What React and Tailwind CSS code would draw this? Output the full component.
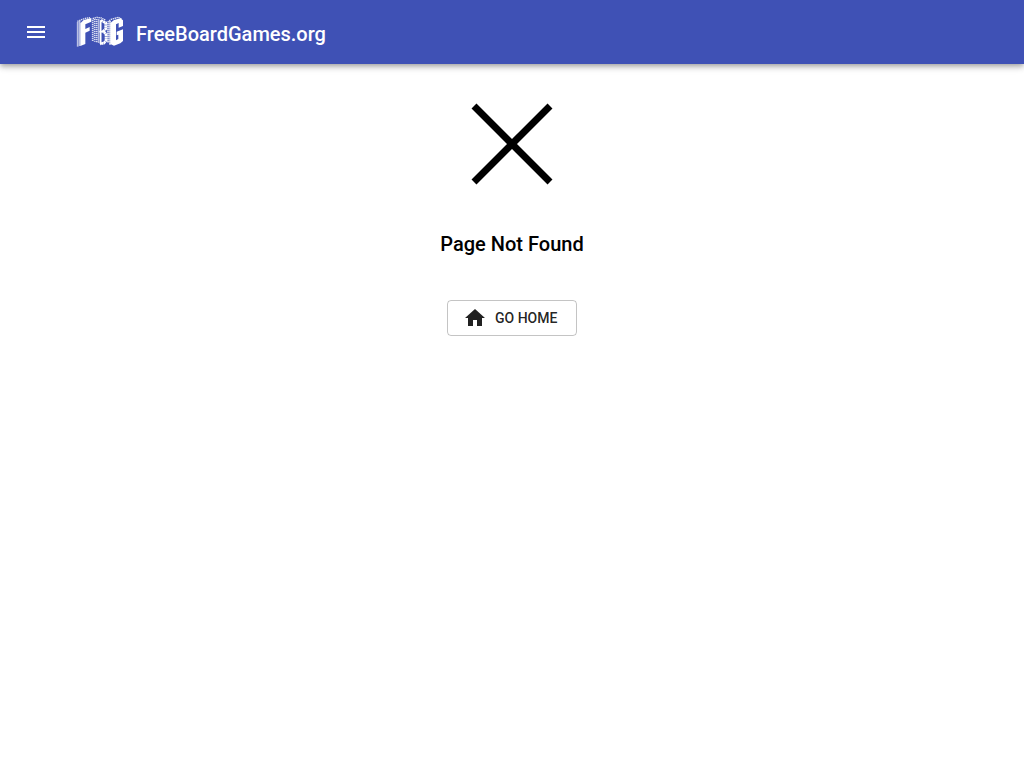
function MenuIcon() {
  return (
    <svg viewBox="0 0 24 24" className="size-6 fill-current" aria-hidden="true">
      <path d="M3 18h18v-2H3v2zm0-5h18v-2H3v2zm0-7v2h18V6H3z" />
    </svg>
  );
}

function HomeIcon() {
  return (
    <svg viewBox="0 0 24 24" className="size-6 fill-current" aria-hidden="true">
      <path d="M10 20v-6h4v6h5v-8h3L12 3 2 12h3v8z" />
    </svg>
  );
}

function Logo() {
  return (
    <svg viewBox="18 18 144 96" className="h-8 w-12" fill="none" stroke="#fff" aria-hidden="true">
      {/* F: brick side and solid face */}
      <path d="M23 37V110M29 34V108" strokeWidth="5" strokeDasharray="4 2" opacity=".85" />
      <path d="M22 34L46 25L62 23" strokeWidth="4" strokeDasharray="4 2" opacity=".85" />
      <path fill="#fff" stroke="none" d="M31 40L41 30L64 24V35L46 43V57L59 51V62L46 68V102L31 108Z" />
      {/* B: tiled block */}
      <path d="M68 26L80 22L94 24L106 30" strokeWidth="4" strokeDasharray="4 2" opacity=".9" />
      <path d="M68 29V93M74 27V95M80 27V97M86 28V99" strokeWidth="5" strokeDasharray="4 2" opacity=".8" />
      <path d="M92 31L107 38V57L100 64L108 72V92L102 99L90 102" strokeWidth="8" strokeDasharray="7 1" />
      <path d="M92 31V102M88 65H103" strokeWidth="5" />
      {/* G: brick side and solid face */}
      <path d="M114 38V99M120 33V104" strokeWidth="5" strokeDasharray="5 1" opacity=".9" />
      <path d="M113 36L123 28L145 22L155 27" strokeWidth="4" strokeDasharray="4 2" opacity=".9" />
      <path fill="#fff" stroke="none" d="M121 39L132 30L151 25L159 31V48L146 53V39L138 43V91L145 87V74L140 76V65L159 58V93L151 100L132 107L121 102Z" />
    </svg>
  );
}

function CrossIcon() {
  return (
    <svg viewBox="0 0 96 96" className="size-24" stroke="#000" strokeWidth="7" aria-hidden="true">
      <path d="M10 10L86 86M86 10L10 86" />
    </svg>
  );
}

export default function App() {
  return (
    <div className="min-h-screen bg-white font-['Roboto',sans-serif] text-black">
      <header className="flex h-16 items-center bg-[#3f51b5] px-6 text-white shadow-[0_2px_4px_-1px_rgba(0,0,0,0.2),0_4px_5px_0_rgba(0,0,0,0.14),0_1px_10px_0_rgba(0,0,0,0.12)]">
        <button type="button" aria-label="Open menu" className="mr-7">
          <MenuIcon />
        </button>
        <a href="/" className="flex items-center gap-3">
          <Logo />
          <span className="pt-1 text-xl font-medium">FreeBoardGames.org</span>
        </a>
      </header>
      <main className="flex flex-col items-center px-4 pt-8">
        <CrossIcon />
        <h1 className="mt-9 text-xl leading-8 font-medium">Page Not Found</h1>
        <a
          href="/"
          className="mt-10 flex h-9 min-w-[130px] items-center gap-2 rounded border border-black/23 px-[15px] text-sm font-medium text-black/87 uppercase"
        >
          <HomeIcon />
          Go Home
        </a>
      </main>
    </div>
  );
}
